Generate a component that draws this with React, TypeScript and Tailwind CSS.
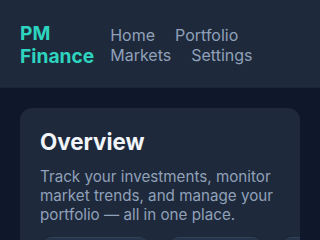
import React from 'react';

const navLinks = ['Home', 'Portfolio', 'Markets', 'Settings'];

function Header() {
  return (
    <header className="flex items-center gap-4 bg-[#1e293b] px-5 pt-[22px] pb-[19px] border-b border-[#1a2434]">
      <div className="text-[19.2px] font-bold leading-[23px] text-[#2dd4bf]">
        PM
        <br />
        Finance
      </div>
      <nav className="flex flex-wrap gap-x-5 leading-5 text-base text-slate-400">
        {navLinks.map((link) => (
          <a key={link} href="#" className="hover:text-slate-200">
            {link}
          </a>
        ))}
      </nav>
    </header>
  );
}

export default function App() {
  return (
    <div className="min-h-screen bg-[#0f172a] font-['Inter',sans-serif]">
      <Header />
      <main className="p-5">
        <section className="overflow-hidden rounded-xl bg-[#1e293b] px-5 pt-[22px] pb-5">
          <h2 className="text-[22.4px] font-bold leading-6 text-slate-100">Overview</h2>
          <p className="mt-[13px] text-[15.2px] leading-[19px] text-slate-400">
            Track your investments, monitor market trends, and manage your portfolio — all in one place.
          </p>
          <div className="mt-[13px] flex gap-6 pl-1">
            <div className="h-16 w-[103px] shrink-0 rounded-lg border-t border-[#334155] bg-[#25344a]" />
            <div className="h-16 w-[89px] shrink-0 rounded-lg border-t border-[#334155] bg-[#25344a]" />
            <div className="h-16 w-[89px] shrink-0 rounded-lg border-t border-[#334155] bg-[#25344a]" />
          </div>
        </section>
      </main>
    </div>
  );
}
